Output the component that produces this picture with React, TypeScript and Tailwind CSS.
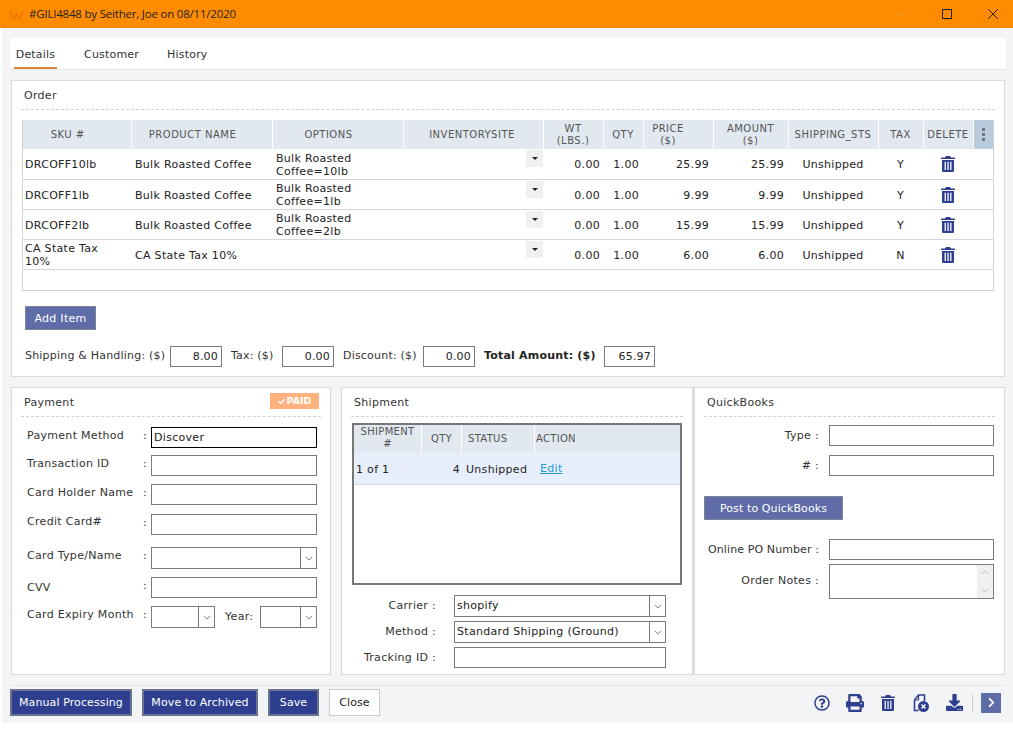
import { FaCheck, FaChevronRight, FaDownload, FaPrint, FaRegQuestionCircle } from "react-icons/fa";
import type { ReactNode } from "react";

const orderRows = [
  { sku: "DRCOFF10lb", name: "Bulk Roasted Coffee", opt: "Bulk Roasted Coffee=10lb", price: "25.99", tax: "Y" },
  { sku: "DRCOFF1lb", name: "Bulk Roasted Coffee", opt: "Bulk Roasted Coffee=1lb", price: "9.99", tax: "Y" },
  { sku: "DRCOFF2lb", name: "Bulk Roasted Coffee", opt: "Bulk Roasted Coffee=2lb", price: "15.99", tax: "Y" },
  { sku: "CA State Tax 10%", name: "CA State Tax 10%", opt: "", price: "6.00", tax: "N" },
];

const headCell = "bg-[#e1e8ef] border-r border-white font-normal text-[#555] text-[10px] leading-[12px] tracking-[0.5px] text-center p-0";
const plainCell = "border-b border-[#d4d7db] p-0 text-[11px] leading-[13px]";
const bodyCell = `${plainCell} pt-[2px]`;

function Trash({ className }: { className: string }) {
  return (
    <svg viewBox="0 0 14 16" className={className} fill="currentColor">
      <path d="M5 0h4l1 1.6h3.4c.4 0 .6.3.6.6v.9H0v-.9c0-.3.2-.6.6-.6H4L5 0z" />
      <path
        fillRule="evenodd"
        d="M1 4h12v10.4c0 .9-.7 1.6-1.6 1.6H2.600c-.9 0-1.600-.7-1.600-1.600V4zm2.600 1.800v8.200h1.300V5.800H3.600zm2.800 0v8.200h1.300V5.800H6.400zm2.800 0v8.200h1.300V5.800H9.200z"
      />
    </svg>
  );
}

function Chevron({ className }: { className?: string }) {
  return (
    <svg viewBox="0 0 10 6" className={`w-[8px] h-[5px] ${className ?? ""}`} fill="none" stroke="#666" strokeWidth="1">
      <path d="M1 1l4 4 4-4" />
    </svg>
  );
}

function Box({ className, value, right }: { className: string; value?: string; right?: boolean }) {
  return (
    <input
      readOnly
      value={value ?? ""}
      className={`border border-[#7a7a7a] bg-white text-[11px] text-[#222] outline-none ${right ? "text-right pr-[3px]" : "pl-[3px]"} ${className}`}
    />
  );
}

function Select({ className, value, arrow }: { className: string; value?: string; arrow: string }) {
  return (
    <div className={`flex border border-[#7a7a7a] bg-white text-[11px] text-[#222] ${className}`}>
      <span className="flex-1 pl-[2px] leading-[19px] truncate">{value}</span>
      <span className={`flex items-center justify-center border-l border-[#7a7a7a] ${arrow}`}>
        <Chevron />
      </span>
    </div>
  );
}

function Panel({ className, title, badge, children }: { className: string; title: string; badge?: ReactNode; children: ReactNode }) {
  return (
    <section className={`bg-white border border-[#d9dcdf] ${className}`}>
      <div className="mx-[9px] h-[29px] border-b border-dashed border-[#cfd2d5] flex items-center justify-between pl-[3px]">
        <h2 className="text-[11px] text-[#333] font-normal pt-[2px]">{title}</h2>
        {badge}
      </div>
      {children}
    </section>
  );
}

function PayRow({ label, className, labelClass, children }: { label: string; className: string; labelClass?: string; children: ReactNode }) {
  return (
    <div className={`flex ${className}`}>
      <span className={`w-[131px] pl-[15px] text-[11px] leading-[13px] text-[#333] whitespace-nowrap ${labelClass ?? ""}`}>{label}</span>
      <span className="w-[8px] text-[11px] leading-[13px] text-[#333] mt-[2px]">:</span>
      {children}
    </div>
  );
}

function ToolbarIcon({ children, className }: { children: ReactNode; className: string }) {
  return <span className={`flex items-center justify-center text-[#2f3f8f] ${className}`}>{children}</span>;
}

export default function App() {
  return (
    <div className="w-[1013px] h-[735px] bg-white overflow-hidden font-[DejaVu_Sans,sans-serif] tracking-[0.3px]">
      {/* title bar */}
      <header className="h-[28px] bg-[#ff8c00] flex items-center pl-[9px] text-[#3a2a10]">
        <svg viewBox="0 0 16 12" className="w-[15px] h-[11px] mr-[5px]" fill="none" stroke="#f27a00" strokeWidth="2">
          <path d="M1 2l4 9 3-6 3 6 4-9" />
        </svg>
        <span className="font-[Open_Sans,sans-serif] text-[11.5px] tracking-[-0.2px] text-[#222]">#GILI4848 by Seither, Joe on 08/11/2020</span>
        <div className="ml-auto flex items-center pr-[15px]">
          <span className="w-[10px] h-px bg-[#f09a30] mr-[35px]" />
          <span className="w-[10px] h-[10px] border border-[#222] mr-[36px]" />
          <svg viewBox="0 0 10 10" className="w-[10px] h-[10px]" stroke="#222" strokeWidth="1">
            <path d="M0 0l10 10M10 0L0 10" />
          </svg>
        </div>
      </header>

      <div className="ml-[2px] h-[695px] bg-[#f3f4f6] pt-[10px] pl-[8px]">
        {/* tabs */}
        <nav className="w-[996px] h-[32px] bg-white border-b border-[#e3e5e7] rounded-t-[2px] flex text-[11px] text-[#333] tracking-[0.2px]">
          <span className="ml-[4px] w-[43px] h-[31px] border-b-2 border-[#d8843c] text-center leading-[33px]">Details</span>
          <span className="ml-[27px] leading-[33px]">Customer</span>
          <span className="ml-[28px] leading-[33px]">History</span>
        </nav>

        {/* order */}
        <Panel className="ml-[1px] mt-[10px] w-[994px] h-[297px]" title="Order">
          <div className="h-[10px]" />
          <div className="ml-[10px] w-[972px] h-[171px] border border-[#cfd2d5] border-t-0">
            <table className="table-fixed w-full border-collapse">
              <colgroup>
                <col className="w-[108px]" />
                <col className="w-[141px]" />
                <col className="w-[131px]" />
                <col className="w-[140px]" />
                <col className="w-[60px]" />
                <col className="w-[40px]" />
                <col className="w-[70px]" />
                <col className="w-[75px]" />
                <col className="w-[90px]" />
                <col className="w-[45px]" />
                <col className="w-[50px]" />
                <col />
              </colgroup>
              <thead>
                <tr className="h-[29px]">
                  <th className={`${headCell} pr-[18px]`}>SKU #</th>
                  <th className={`${headCell} pr-[18px]`}>PRODUCT NAME</th>
                  <th className={`${headCell} pr-[18px]`}>OPTIONS</th>
                  <th className={`${headCell} pr-[2px]`}>INVENTORYSITE</th>
                  <th className={headCell}>WT<br />(LBS.)</th>
                  <th className={headCell}>QTY</th>
                  <th className={`${headCell} pr-[20px]`}>PRICE<br />($)</th>
                  <th className={headCell}>AMOUNT<br />($)</th>
                  <th className={`${headCell} whitespace-nowrap tracking-[0.3px]`}>SHIPPING_STS</th>
                  <th className={headCell}>TAX</th>
                  <th className={`${headCell} tracking-[0.3px]`}>DELETE</th>
                  <th className="bg-[#b9cbdc] p-0 border-0">
                    <div className="flex flex-col items-center gap-[2px]">
                      <span className="w-[3px] h-[3px] bg-[#6d7784]" />
                      <span className="w-[3px] h-[3px] bg-[#6d7784]" />
                      <span className="w-[3px] h-[3px] bg-[#6d7784]" />
                    </div>
                  </th>
                </tr>
              </thead>
              <tbody className="text-[#222]">
                {orderRows.map((r) => (
                  <tr key={r.sku} className="h-[30px]">
                    <td className={`${bodyCell} pl-[2px] pr-[20px]`}>{r.sku}</td>
                    <td className={`${bodyCell} pl-[4px]`}>{r.name}</td>
                    <td className={`${bodyCell} pl-[4px] pr-[20px]`}>{r.opt}</td>
                    <td className={`${plainCell} align-top`}>
                      <div className="ml-auto mt-px w-[17px] h-[17px] bg-[#f0f0f0] flex items-center justify-center">
                        <span className="border-x-[3px] border-t-[3px] border-x-transparent border-t-[#222]" />
                      </div>
                    </td>
                    <td className={`${bodyCell} text-right pr-[3px]`}>0.00</td>
                    <td className={`${bodyCell} text-right pr-[4px]`}>1.00</td>
                    <td className={`${bodyCell} text-right pr-[4px]`}>{r.price}</td>
                    <td className={`${bodyCell} text-right pr-[4px]`}>{r.price}</td>
                    <td className={`${bodyCell} text-center`}>Unshipped</td>
                    <td className={`${bodyCell} text-center`}>{r.tax}</td>
                    <td className={bodyCell}>
                      <Trash className="w-[14px] h-[16px] mx-auto -mt-[1px] text-[#2f3f8f]" />
                    </td>
                    <td className={plainCell} />
                  </tr>
                ))}
              </tbody>
            </table>
          </div>

          <button className="block ml-[13px] mt-[15px] pt-[2px] w-[71px] h-[24px] bg-[#5e6ca8] border border-[#7d8392] text-white text-[11px]">Add Item</button>

          <div className="ml-[13px] mt-[16px] flex items-center text-[11px] text-[#333] tracking-[0.2px]">
            <span className="w-[145px] whitespace-nowrap">Shipping &amp; Handling: ($)</span>
            <Box className="w-[52px] h-[21px]" value="8.00" right />
            <span className="ml-[9px] w-[51px] whitespace-nowrap">Tax: ($)</span>
            <Box className="w-[52px] h-[21px]" value="0.00" right />
            <span className="ml-[9px] w-[80px] whitespace-nowrap">Discount: ($)</span>
            <Box className="w-[52px] h-[21px]" value="0.00" right />
            <b className="ml-[9px] w-[120px] whitespace-nowrap text-[#222]">Total Amount: ($)</b>
            <Box className="w-[51px] h-[21px]" value="65.97" right />
          </div>
        </Panel>

        <div className="ml-[1px] mt-[10px] flex w-[994px] h-[288px]">
          {/* payment */}
          <Panel
            className="w-[320px]"
            title="Payment"
            badge={
              <span className="w-[49px] h-[16px] bg-[#ffb27e] text-white text-[9.5px] font-bold tracking-normal flex items-center justify-center gap-[2px] mr-[2px] -mt-[2px]">
                <FaCheck className="w-[7px] h-[7px]" />
                PAID
              </span>
            }
          >
            <PayRow label="Payment Method" className="mt-[10px]" labelClass="mt-[2px]">
              <input readOnly value="Discover" className="w-[166px] h-[21px] border border-black pl-[2px] text-[11px] text-[#222] outline-none" />
            </PayRow>
            <PayRow label="Transaction ID" className="mt-[7px]" labelClass="mt-[2px]">
              <Box className="w-[166px] h-[21px]" />
            </PayRow>
            <PayRow label="Card Holder Name" className="mt-[8px]" labelClass="mt-[2px]">
              <Box className="w-[166px] h-[21px]" />
            </PayRow>
            <PayRow label="Credit Card#" className="mt-[9px]" labelClass="mt-px">
              <Box className="w-[166px] h-[21px]" />
            </PayRow>
            <PayRow label="Card Type/Name" className="mt-[12px]" labelClass="mt-[2px]">
              <Select className="w-[166px] h-[22px]" arrow="w-[16px]" />
            </PayRow>
            <PayRow label="CVV" className="mt-[8px]" labelClass="mt-[4px]">
              <Box className="w-[166px] h-[21px]" />
            </PayRow>
            <PayRow label="Card Expiry Month" className="mt-[8px]" labelClass="mt-[2px]">
              <Select className="w-[64px] h-[22px]" arrow="w-[16px]" />
              <span className="ml-[10px] w-[35px] text-[11px] text-[#333] leading-[22px]">Year:</span>
              <Select className="w-[57px] h-[22px]" arrow="w-[16px]" />
            </PayRow>
          </Panel>

          <div className="w-[10px]" />

          {/* shipment */}
          <Panel className="w-[352px]" title="Shipment">
            <div className="ml-[10px] mt-[6px] w-[330px] h-[162px] border-2 border-[#777]">
              <div className="flex h-[28px] bg-[#e1e8ef] text-[#555] text-[10px] leading-[12px] text-center">
                <div className="w-[68px] border-r border-white pt-[1px]">SHIPMENT<br />#</div>
                <div className="w-[40px] border-r border-white flex items-center justify-center">QTY</div>
                <div className="w-[73px] border-r border-white flex items-center pl-[6px]">STATUS</div>
                <div className="pl-[1px] flex items-center overflow-hidden">ACTION</div>
              </div>
              <div className="flex items-center h-[32px] pt-[3px] bg-[#e8effc] border-b border-[#d4d7db] text-[11px] text-[#222]">
                <span className="w-[68px] pl-[2px]">1 of 1</span>
                <span className="w-[38px] text-right">4</span>
                <span className="ml-[6px] w-[73px] whitespace-nowrap">Unshipped</span>
                <a className="ml-[1px] text-[#1e9be0] underline -mt-[1px]">Edit</a>
              </div>
            </div>
            <div className="flex items-center mt-[10px]">
              <span className="w-[94px] text-right text-[11px] text-[#333]">Carrier :</span>
              <Select className="ml-[18px] w-[212px] h-[22px]" value="shopify" arrow="w-[16px]" />
            </div>
            <div className="flex items-center mt-[4px]">
              <span className="w-[94px] text-right text-[11px] text-[#333]">Method :</span>
              <Select className="ml-[18px] w-[212px] h-[22px]" value="Standard Shipping (Ground)" arrow="w-[16px]" />
            </div>
            <div className="flex items-center mt-[4px]">
              <span className="w-[94px] text-right text-[11px] text-[#333] whitespace-nowrap pt-px">Tracking ID :</span>
              <Box className="ml-[18px] w-[212px] h-[21px]" />
            </div>
          </Panel>

          {/* quickbooks */}
          <Panel className="w-[312px] border-l-2" title="QuickBooks">
            <div className="flex items-center mt-[8px]">
              <span className="w-[124px] text-right text-[11px] text-[#333] pt-[2px]">Type :</span>
              <Box className="ml-[10px] w-[165px] h-[21px]" />
            </div>
            <div className="flex items-center mt-[9px]">
              <span className="w-[124px] text-right text-[11px] text-[#333] pt-[2px]">#  :</span>
              <Box className="ml-[10px] w-[165px] h-[21px]" />
            </div>
            <button className="block ml-[9px] mt-[20px] pt-[2px] w-[139px] h-[24px] bg-[#5e6ca8] border border-[#7d8392] text-white text-[11px] tracking-[0.1px]">Post to QuickBooks</button>
            <div className="flex items-center mt-[19px]">
              <span className="w-[124px] text-right text-[11px] text-[#333] whitespace-nowrap pt-[2px] tracking-[0.1px]">Online PO Number :</span>
              <Box className="ml-[10px] w-[165px] h-[21px]" />
            </div>
            <div className="flex mt-[4px]">
              <span className="w-[124px] text-right text-[11px] text-[#333] mt-[9px] whitespace-nowrap">Order Notes  :</span>
              <div className="ml-[10px] w-[165px] h-[35px] border border-[#7a7a7a] flex justify-end">
                <div className="w-[16px] bg-[#f0f0f0] flex flex-col items-center justify-between py-[5px]">
                  <Chevron className="rotate-180 opacity-40" />
                  <Chevron className="opacity-40" />
                </div>
              </div>
            </div>
          </Panel>
        </div>

        {/* footer */}
        <footer className="mt-[10px] ml-[1px] w-[994px] border-t border-[#e3e5e7] pt-[3px] flex items-center text-[11px] tracking-[0.1px]">
          <button className="-ml-[1px] pt-px w-[122px] h-[27px] bg-[#2f3f8f] border-2 border-[#6b7390] text-white">Manual Processing</button>
          <button className="ml-[10px] pt-px w-[116px] h-[27px] bg-[#2f3f8f] border-2 border-[#6b7390] text-white">Move to Archived</button>
          <button className="ml-[10px] pt-px w-[51px] h-[27px] bg-[#2f3f8f] border-2 border-[#6b7390] text-white">Save</button>
          <button className="ml-[10px] pt-px w-[51px] h-[27px] bg-white border border-[#c9cbce] text-[#222]">Close</button>

          <div className="ml-auto flex items-center">
            <ToolbarIcon className="w-[16px]"><FaRegQuestionCircle className="w-[16px] h-[16px]" /></ToolbarIcon>
            <ToolbarIcon className="ml-[15px] w-[20px]"><FaPrint className="w-[18px] h-[18px]" /></ToolbarIcon>
            <ToolbarIcon className="ml-[16px] w-[14px]"><Trash className="w-[14px] h-[16px]" /></ToolbarIcon>
            <ToolbarIcon className="ml-[18px] w-[16px]">
              <svg viewBox="0 0 16 18" className="w-[16px] h-[18px]">
                <path d="M1.500 6l4-5h6v6M1.500 6v10.500h4" fill="none" stroke="currentColor" strokeWidth="1.600" />
                <path d="M1.500 6h4V1" fill="none" stroke="currentColor" strokeWidth="1.200" />
                <circle cx="10.500" cy="12.500" r="5.500" fill="currentColor" />
                <path d="M8.500 10.500l4 4M12.500 10.500l-4 4" stroke="#fff" strokeWidth="1.400" />
              </svg>
            </ToolbarIcon>
            <ToolbarIcon className="ml-[16px] w-[18px]"><FaDownload className="w-[17px] h-[17px]" /></ToolbarIcon>
            <span className="ml-[9px] w-px h-[18px] bg-[#ccced2]" />
            <span className="ml-[8px] mr-[4px] w-[20px] h-[20px] bg-[#5e6ca8] flex items-center justify-center text-white">
              <FaChevronRight className="w-[11px] h-[11px]" />
            </span>
          </div>
        </footer>
      </div>
    </div>
  );
}
